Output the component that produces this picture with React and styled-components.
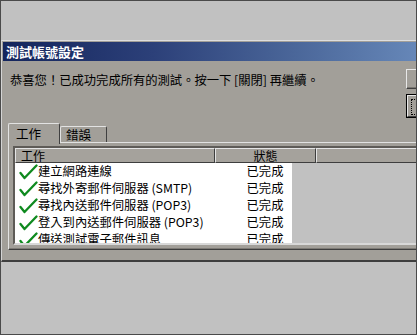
import React from 'react';
import styled, { createGlobalStyle } from 'styled-components';

const GlobalStyle = createGlobalStyle`
  body {
    margin: 0;
    background: #c1c1c1;
    font-family: "Noto Sans CJK TC", "Liberation Sans", sans-serif;
  }
`;

const Frame = styled.div`
  width: 417px;
  height: 335px;
  box-sizing: border-box;
  border: 1px solid #4a4a4a;
  background: #c1c1c1;
  overflow: hidden;
  display: flex;
  flex-direction: column;
`;

const TopGap = styled.div`
  height: 39px;
  flex: none;
`;

const Dialog = styled.div`
  width: 540px;
  flex: none;
  background: #a29f99;
  border-top: 1px solid #dedede;
  border-left: 1px solid #d4d4d4;
  border-bottom: 2px solid #3e3e3e;
  padding-top: 1px;
  padding-left: 1px;
`;

const TitleBar = styled.div`
  height: 19px;
  display: flex;
  align-items: center;
  padding-left: 3px;
  background: linear-gradient(90deg, #14255c 0px, #2c4079 150px, #4a6699 290px, #6687b8 414px, #9ab8e0 540px);
  color: #ffffff;
  font-size: 13px;
  font-weight: bold;
`;

const Body = styled.div`
  padding: 8px 0 10px 7px;
`;

const TopRow = styled.div`
  display: flex;
  align-items: flex-start;
`;

const Message = styled.div`
  width: 396px;
  flex: none;
  padding-top: 4px;
  font-size: 12.3px;
  line-height: 14px;
  color: #000;
  white-space: nowrap;
`;

const ButtonColumn = styled.div`
  display: flex;
  flex-direction: column;
  gap: 6px;
`;

const Button = styled.div`
  width: 75px;
  height: ${({ $def }) => ($def ? '20px' : '18px')};
  background: #a29f99;
  border: 1px solid;
  border-color: #e8e8e8 #404040 #404040 #e8e8e8;
  box-shadow: ${({ $def }) => ($def ? '0 0 0 1px #000' : 'inset -1px -1px 0 #7a7772')};
  margin-left: ${({ $def }) => ($def ? '1px' : '0')};
  position: relative;

  &::after {
    content: '';
    display: ${({ $def }) => ($def ? 'block' : 'none')};
    position: absolute;
    left: 3px;
    top: 3px;
    width: 60px;
    height: 14px;
    border: 1px dotted #000;
  }
`;

const Tabs = styled.div`
  margin-top: 7px;
  margin-left: -2px;
`;

const TabRow = styled.div`
  display: flex;
  align-items: flex-end;
  height: 18px;
`;

const Tab = styled.div`
  position: relative;
  z-index: ${({ $active }) => ($active ? 2 : 1)};
  height: ${({ $active }) => ($active ? '20px' : '15px')};
  margin-bottom: ${({ $active }) => ($active ? '-2px' : '0')};
  padding: ${({ $active }) => ($active ? '0 10px 0 7px' : '0 8px 0 5px')};
  width: ${({ $active }) => ($active ? '33px' : '32px')};
  background: #a29f99;
  border-top: 1px solid #e2e2e2;
  border-left: 1px solid #e2e2e2;
  border-right: 1px solid #404040;
  border-radius: 2px 2px 0 0;
  font-size: 12.5px;
  line-height: ${({ $active }) => ($active ? '19px' : '16px')};
  color: #000;
  white-space: nowrap;
`;

const Panel = styled.div`
  width: 500px;
  border-top: 1px solid #e2e2e2;
  border-left: 1px solid #e2e2e2;
  border-bottom: 1px solid #3e3e3e;
  box-shadow: inset 0 -1px 0 #7e7b76;
  padding: 3px 0 4px 4px;
`;

const List = styled.div`
  width: 480px;
  height: 95px;
  border: 2px solid;
  border-color: #5e5b57 #ececec #d8d8d8 #5e5b57;
  background: #c1c1c1;
  overflow: hidden;
`;

const HeaderRow = styled.div`
  display: flex;
  height: 15px;
`;

const HeaderCell = styled.div`
  width: ${({ $w }) => $w}px;
  flex: none;
  box-sizing: border-box;
  overflow: hidden;
  background: #a5a29c;
  border-top: 1px solid #e4e4e4;
  border-left: 1px solid #e4e4e4;
  border-right: 1px solid #3e3e3e;
  border-bottom: 1px solid #3e3e3e;
  font-size: 12px;
  line-height: 13px;
  color: #000;
  text-align: ${({ $center }) => ($center ? 'center' : 'left')};
  padding-left: ${({ $center }) => ($center ? '0' : '5px')};
`;

const Rows = styled.div`
  width: 277px;
  background: #ffffff;
`;

const Row = styled.div`
  display: flex;
  align-items: center;
  height: 17px;
`;

const NameCell = styled.div`
  width: 200px;
  flex: none;
  display: flex;
  align-items: center;
  padding-left: 4px;
  box-sizing: border-box;
  font-size: 12.3px;
  line-height: 13px;
  color: #000;
  white-space: nowrap;
`;

const StatusCell = styled.div`
  width: 100px;
  flex: none;
  text-align: center;
  font-size: 12.3px;
  line-height: 13px;
  color: #000;
  white-space: nowrap;
`;

const CheckIcon = () => (
  <svg width="19" height="16" viewBox="0 0 19 16" style={{ flex: 'none' }}>
    <path d="M1.5 9 L5.5 14 L17.5 1.5" fill="none" stroke="#0f8a1f" strokeWidth="2.3" strokeLinecap="round" strokeLinejoin="round" />
  </svg>
);

const tasks = [
  '建立網路連線',
  '尋找外寄郵件伺服器 (SMTP)',
  '尋找內送郵件伺服器 (POP3)',
  '登入到內送郵件伺服器 (POP3)',
  '傳送測試電子郵件訊息',
];

export default function App() {
  return (
    <>
      <GlobalStyle />
      <Frame>
        <TopGap />
        <Dialog>
          <TitleBar>測試帳號設定</TitleBar>
          <Body>
            <TopRow>
              <Message>恭喜您！已成功完成所有的測試。按一下 [關閉] 再繼續。</Message>
              <ButtonColumn>
                <Button />
                <Button $def />
              </ButtonColumn>
            </TopRow>
            <Tabs>
              <TabRow>
                <Tab $active>工作</Tab>
                <Tab>錯誤</Tab>
              </TabRow>
              <Panel>
                <List>
                  <HeaderRow>
                    <HeaderCell $w={200}>工作</HeaderCell>
                    <HeaderCell $w={101} $center>狀態</HeaderCell>
                    <HeaderCell $w={180} />
                  </HeaderRow>
                  <Rows>
                    {tasks.map((t) => (
                      <Row key={t}>
                        <NameCell>
                          <CheckIcon />
                          <span>{t}</span>
                        </NameCell>
                        <StatusCell>已完成</StatusCell>
                      </Row>
                    ))}
                  </Rows>
                </List>
              </Panel>
            </Tabs>
          </Body>
        </Dialog>
      </Frame>
    </>
  );
}
